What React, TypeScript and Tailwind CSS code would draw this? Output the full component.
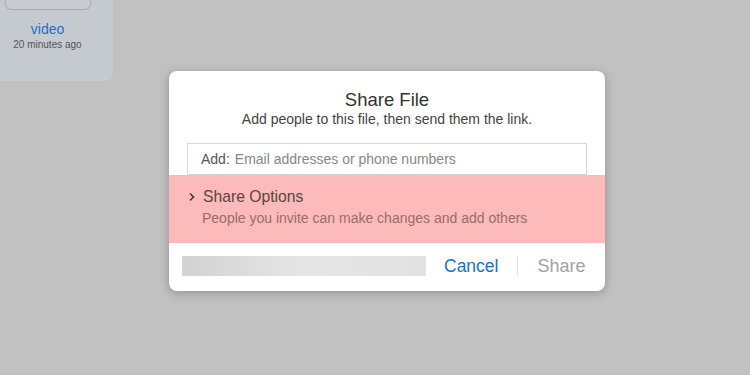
export default function App() {
  return (
    <div
      className="relative h-[375px] w-[750px] overflow-hidden bg-[#c1c1c1]"
      style={{ fontFamily: '"Liberation Sans", Arial, sans-serif' }}
    >
      {/* file tile behind the dialog */}
      <div className="flex h-[81px] w-[113px] flex-col rounded-br-lg bg-[#c5cad0]">
        <div className="ml-[5px] h-[10px] w-[86px] rounded-b-md border border-t-0 border-[#a9adb2] bg-[#c9cbce]" />
        <div className="flex w-[95px] flex-col items-center">
          <div className="mt-[10px] text-[14px] leading-[18px] text-[#1f6fc4]">video</div>
          <div className="text-[10px] leading-[14px] text-[#555]">20 minutes ago</div>
        </div>
      </div>

      {/* dialog */}
      <div className="absolute left-[169px] top-[71px] w-[436px] overflow-hidden rounded-lg bg-white shadow-[0_2px_10px_rgba(0,0,0,0.25)]">
        <div className="flex flex-col items-center pt-[17px]">
          <h2 className="text-[18.5px] leading-[23px] text-[#333]">Share File</h2>
          <p className="text-[14px] leading-[16px] text-[#444]">
            Add people to this file, then send them the link.
          </p>
        </div>

        <div className="mx-[18px] mt-[16px] flex h-[32px] items-center border border-[#d6d6d6] px-[13px] text-[14px]">
          <span className="text-[#555]">Add:</span>
          <span className="ml-[5px] text-[#888]">Email addresses or phone numbers</span>
        </div>

        <div className="flex h-[68px] flex-col justify-center bg-[#fdbaba] pl-[18px] pb-[4px]">
          <div className="flex items-center text-[15.7px] leading-[20px] text-[#5a4444]">
            <svg width="10" height="10" viewBox="0 0 10 10" className="mr-[6px]">
              <path d="M3 1.5 L6.5 5 L3 8.5" fill="none" stroke="#4a3838" strokeWidth="1.6" />
            </svg>
            Share Options
          </div>
          <div className="mt-[3px] pl-[15px] text-[14px] leading-[17px] text-[#9a6c6c]">
            People you invite can make changes and add others
          </div>
        </div>

        <div className="flex h-[48px] items-center pl-[13px] pr-[19px] pb-[2px]">
          <div className="h-[20px] w-[244px] bg-gradient-to-r from-[#d2d2d2] via-[#e6e6e6] to-[#e2e2e2]" />
          <button className="ml-[18px] text-[17.5px] leading-[20px] text-[#1d6fc6]">Cancel</button>
          <div className="mx-[19px] h-[20px] w-px bg-[#e4e4e4]" />
          <button className="text-[18px] leading-[20px] text-[#a3a3a3]">Share</button>
        </div>
      </div>
    </div>
  );
}
